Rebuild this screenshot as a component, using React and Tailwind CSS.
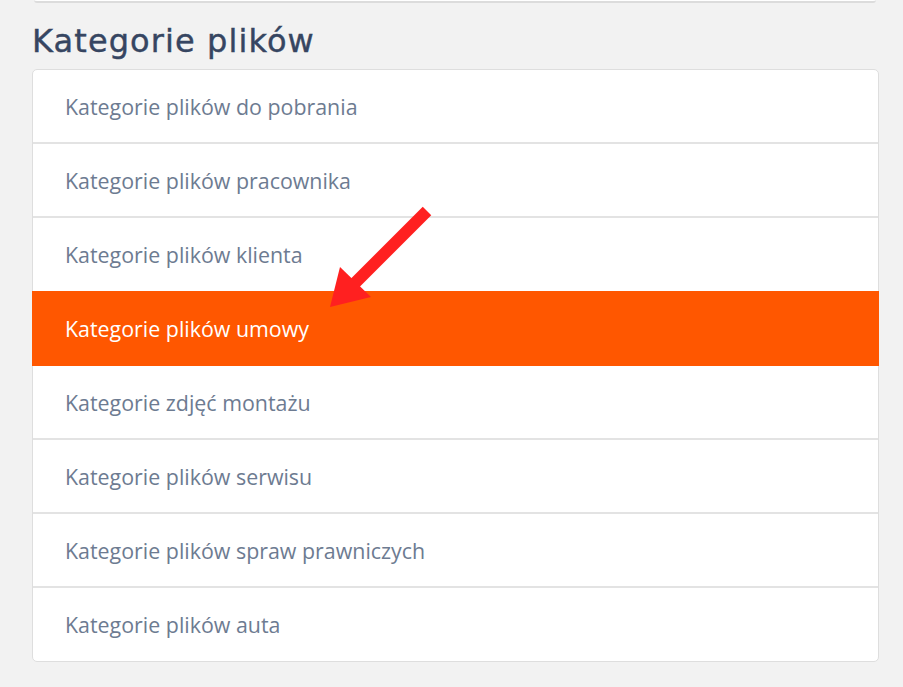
import React from "react";

const items = [
  "Kategorie plików do pobrania",
  "Kategorie plików pracownika",
  "Kategorie plików klienta",
  "Kategorie plików umowy",
  "Kategorie zdjęć montażu",
  "Kategorie plików serwisu",
  "Kategorie plików spraw prawniczych",
  "Kategorie plików auta",
];

const active = 3;

const rowClass = (i) => {
  if (i === active)
    return "h-[75px] flex items-center pt-[2px] px-[33px] text-white bg-[#ff5700] -mx-px";
  if (i === active - 1 || i === items.length - 1)
    return "h-[73px] flex items-center pt-[2px] px-[32px] text-[#6d7b91]";
  return "h-[74px] flex items-center pt-[2px] px-[32px] text-[#6d7b91] border-b-2 border-[#e3e3e3]";
};

const App = () => {
  return (
    <div className="relative min-h-[687px] w-[903px] bg-[#f2f2f2] overflow-hidden">
      {/* previous card edge */}
      <div className="ml-[34px] mr-[27px] h-[3px] bg-white border-b-2 border-[#dcdcdc] rounded-b" />

      <div className="px-8 pt-[16px]">
        <h2 className="text-[32px] leading-[45px] text-[#364561] font-['DejaVu_Sans',sans-serif] tracking-[1.1px] [-webkit-text-stroke:0.4px_#364561]">
          Kategorie plików
        </h2>

        <ul className="mt-[5px] w-[847px] bg-white border border-[#dedede] rounded-[5px] font-['Open_Sans',sans-serif] text-[21.4px]">
          {items.map((label, i) => (
            <li key={label} className={rowClass(i)}>
              {label}
            </li>
          ))}
        </ul>
      </div>

      {/* annotation arrow */}
      <svg
        className="absolute left-0 top-0 pointer-events-none"
        width="903"
        height="687"
        viewBox="0 0 903 687"
      >
        <line x1="427" y1="211" x2="352" y2="286" stroke="#ff2020" strokeWidth="12" />
        <polygon points="340,267 371,297 330,307" fill="#ff2020" />
      </svg>
    </div>
  );
};

export default App;
